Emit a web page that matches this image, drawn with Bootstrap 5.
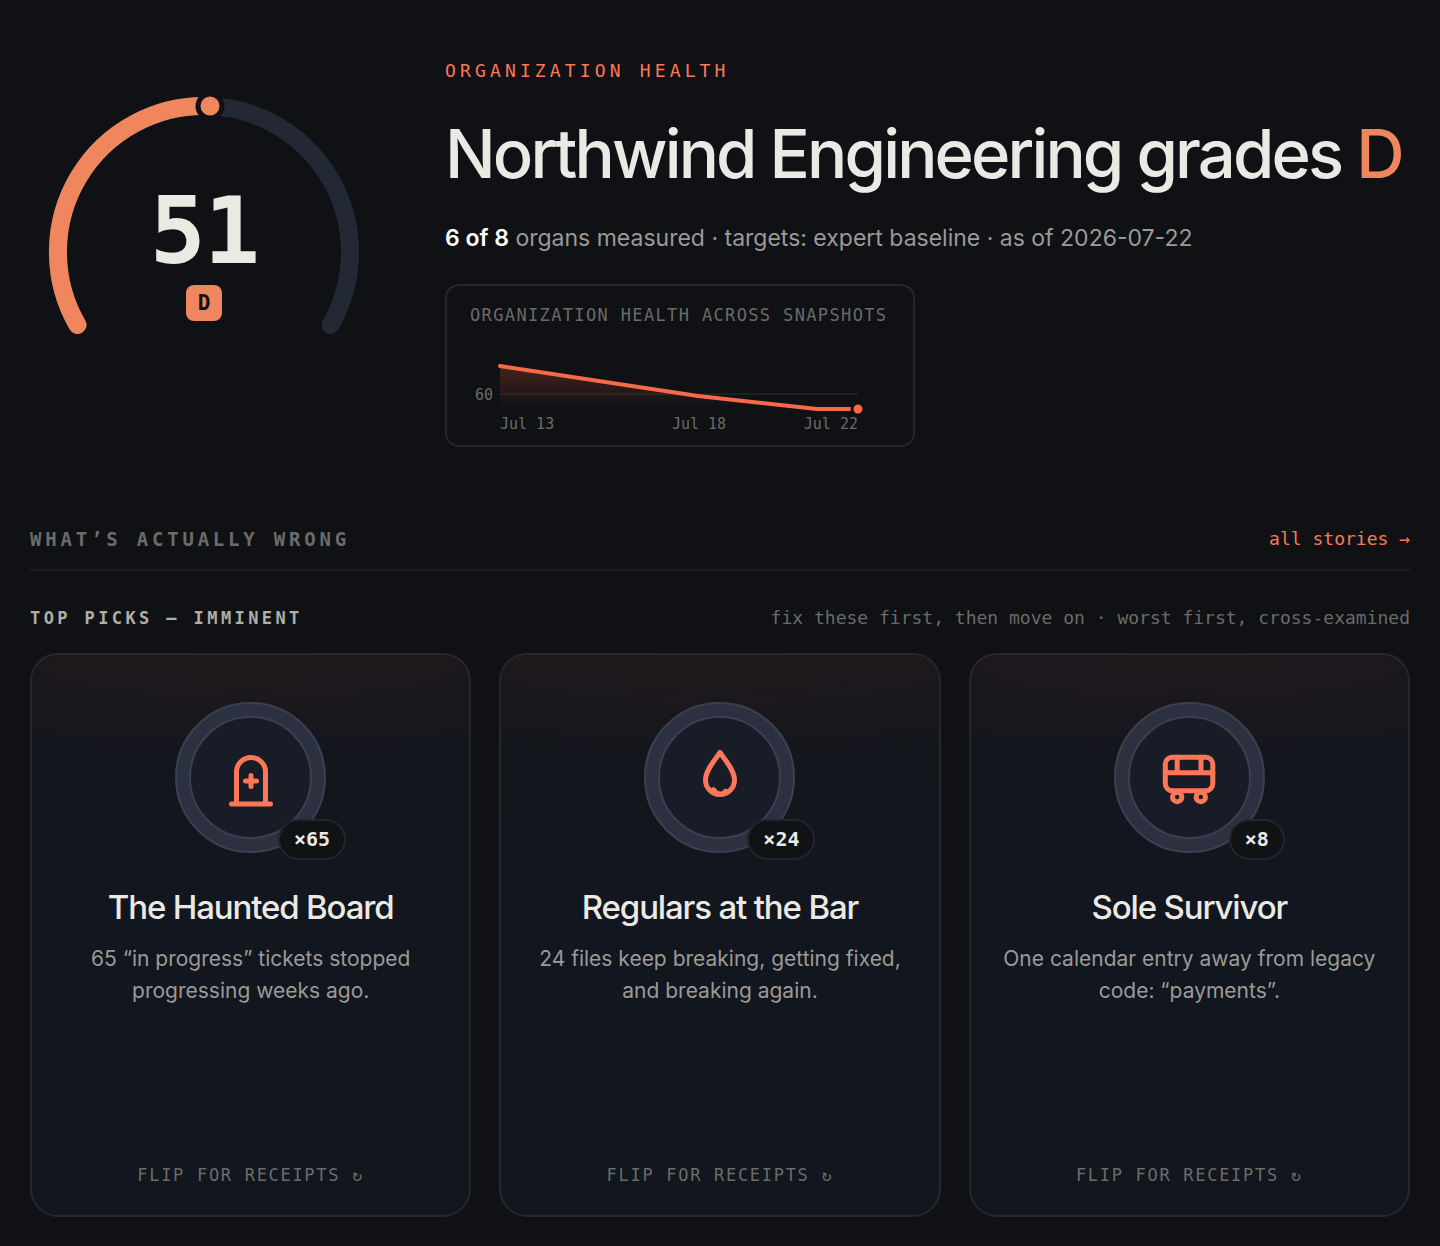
<!DOCTYPE html>
<html lang="en">
<head>
<meta charset="utf-8">
<meta name="viewport" content="width=device-width, initial-scale=1">
<title>Organization health</title>
<link href="https://cdn.jsdelivr.net/npm/bootstrap@5.3.0/dist/css/bootstrap.min.css" rel="stylesheet">
<style>
  :root { --accent: #fb7757; --grade: #f0865e; --ink: #ebe9e4; --muted: #9b9a96; --dim: #6b6b69; --edge: #24272c; }
  body { background: #0f1114; color: var(--ink); font-family: Inter, "Liberation Sans", sans-serif; }
  .page { padding: 56px 30px 29px; }
  .mono { font-family: "DejaVu Sans Mono", "Liberation Mono", monospace; }
  .hero { gap: 67px; }
  .gauge { width: 348px; }
  .gauge-readout { inset: 0; }
  .score { font-size: 93px; line-height: 96px; font-weight: 700; letter-spacing: -0.02em; }
  .grade-chip { width: 36px; height: 36px; border-radius: 8px; background: var(--grade); color: #0f1114; font-size: 21px; line-height: 36px; font-weight: 700; margin-top: 6px; }
  .kicker { font-size: 18px; line-height: 30px; letter-spacing: 0.23em; color: var(--accent); }
  .headline { font-size: 67px; line-height: 72px; font-weight: 500; letter-spacing: -0.043em; margin: 32px 0 30px; }
  .headline span { color: var(--grade); }
  .facts { font-size: 23px; line-height: 36px; color: var(--muted); margin-bottom: 28px; }
  .facts strong { color: #fff; font-weight: 600; }
  .trend { width: 470px; max-width: 100%; padding: 15px 23px 12px; border: 2px solid var(--edge); border-radius: 14px; }
  .trend-title { font-size: 17px; line-height: 28px; letter-spacing: 0.08em; color: var(--dim); }
  .trend svg text { font-size: 15px; fill: var(--dim); }
  .section-head { margin-top: 77px; padding-bottom: 15px; border-bottom: 2px solid #1a1d21; }
  .section-title { font-size: 19px; line-height: 30px; font-weight: 700; letter-spacing: 0.2em; color: var(--dim); }
  .all-link { font-size: 18px; line-height: 30px; color: var(--accent); }
  .picks-head { margin: 32px 0 20px; }
  .picks-title { font-size: 17px; line-height: 30px; font-weight: 700; letter-spacing: 0.2em; color: #b0aea6; }
  .picks-note { font-size: 18px; line-height: 30px; color: var(--dim); }
  .picks { --bs-gutter-x: 28px; }
  .pick { min-height: 564px; padding: 47px 30px 26px; border: 2px solid var(--edge); border-radius: 28px;
    background: radial-gradient(120% 110px at 50% 0, rgba(255, 90, 60, .05), transparent), linear-gradient(#15161b, #12161e 30%); }
  .medal { width: 151px; height: 151px; border: 2px solid #3b404d; border-radius: 50%; background: #2b3140; }
  .medal-core { width: 123px; height: 123px; border: 2px solid #3b404d; border-radius: 50%; background: #171c26; }
  .medal svg { stroke: var(--accent); stroke-width: 5; fill: none; stroke-linecap: round; stroke-linejoin: round; }
  .tally { right: -22px; bottom: -9px; height: 41px; line-height: 37px; padding: 0 14px; border: 2px solid #22252b; border-radius: 21px; background: #101216; font-size: 20px; font-weight: 700; }
  .pick-name { font-size: 33px; line-height: 40px; font-weight: 500; letter-spacing: -0.035em; margin: 34px 0 16px; }
  .pick-text { font-size: 21px; line-height: 32px; color: var(--muted); }
  .flip { font-size: 17px; line-height: 28px; letter-spacing: 0.1em; color: var(--dim); }
</style>
<script src="https://cdn.jsdelivr.net/npm/bootstrap@5.3.0/dist/js/bootstrap.bundle.min.js"></script>
</head>
<body>
<main class="page">
  <section class="hero d-flex align-items-center">
    <div class="gauge position-relative flex-shrink-0">
      <svg class="d-block w-100" viewBox="0 0 348 348" fill="none" stroke-width="18" stroke-linecap="round" aria-hidden="true">
        <path d="M47.5 247A146 146 0 1 1 300.5 247" stroke="#222935"/>
        <path d="M47.5 247A146 146 0 0 1 180 28.1" stroke="#f0865e"/>
        <circle cx="180" cy="28" r="12" fill="#f0865e" stroke="#0f1114" stroke-width="5"/>
      </svg>
      <div class="gauge-readout position-absolute d-flex flex-column align-items-center justify-content-center mono">
        <div class="score">51</div>
        <div class="grade-chip text-center">D</div>
      </div>
    </div>
    <div class="flex-grow-1">
      <div class="kicker mono">ORGANIZATION HEALTH</div>
      <h1 class="headline">Northwind Engineering grades <span>D</span></h1>
      <p class="facts"><strong>6 of 8</strong> organs measured · targets: expert baseline · as of 2026-07-22</p>
      <div class="trend mono">
        <div class="trend-title text-nowrap">ORGANIZATION HEALTH ACROSS SNAPSHOTS</div>
        <svg class="d-block" width="420" height="104" viewBox="0 0 420 104" role="img" aria-label="Health score from Jul 13 to Jul 22">
          <defs>
            <linearGradient id="fade" x1="0" y1="36" x2="0" y2="79" gradientUnits="userSpaceOnUse">
              <stop offset="0" stop-color="#ff5e3a" stop-opacity=".24"/>
              <stop offset="1" stop-color="#ff5e3a" stop-opacity="0"/>
            </linearGradient>
          </defs>
          <path d="M30 65H388" stroke="#1d2023" stroke-width="2"/>
          <path d="M30 37L228 67L347 80H30z" fill="url(#fade)"/>
          <path d="M30 37L228 67L347 80H388" fill="none" stroke="#f8694a" stroke-width="4" stroke-linecap="round" stroke-linejoin="round"/>
          <circle cx="388" cy="80" r="6" fill="#ff6a45" stroke="#0f1114" stroke-width="3"/>
          <text x="5" y="71">60</text>
          <text x="30" y="100">Jul 13</text>
          <text x="229" y="100" text-anchor="middle">Jul 18</text>
          <text x="388" y="100" text-anchor="end">Jul 22</text>
        </svg>
      </div>
    </div>
  </section>

  <section>
    <div class="section-head d-flex justify-content-between align-items-center mono">
      <h2 class="section-title mb-0">WHAT’S ACTUALLY WRONG</h2>
      <a class="all-link text-decoration-none" href="#stories">all stories →</a>
    </div>
    <div class="picks-head d-flex justify-content-between align-items-center mono">
      <h3 class="picks-title mb-0">TOP PICKS — IMMINENT</h3>
      <span class="picks-note">fix these first, then move on · worst first, cross-examined</span>
    </div>
    <div class="picks row" id="stories">
      <div class="col-4">
        <article class="pick h-100 d-flex flex-column align-items-center text-center">
          <div class="medal position-relative d-flex align-items-center justify-content-center">
            <div class="medal-core d-flex align-items-center justify-content-center">
              <svg width="60" height="60" viewBox="0 0 60 60" aria-hidden="true"><path d="M15.500 56V24a14.500 14.500 0 0 1 29 0v32M10.500 56h39M30 27.500v11M24.500 33h11"/></svg>
            </div>
            <span class="tally mono position-absolute">×65</span>
          </div>
          <h4 class="pick-name">The Haunted Board</h4>
          <p class="pick-text mb-0">65 “in progress” tickets stopped progressing weeks ago.</p>
          <button type="button" class="flip mono btn border-0 p-0 mt-auto">FLIP FOR RECEIPTS ↻</button>
        </article>
      </div>
      <div class="col-4">
        <article class="pick h-100 d-flex flex-column align-items-center text-center">
          <div class="medal position-relative d-flex align-items-center justify-content-center">
            <div class="medal-core d-flex align-items-center justify-content-center">
              <svg width="60" height="60" viewBox="0 0 60 60" aria-hidden="true"><path d="M30 4.500C35 12 44.500 22 44.500 32a14.500 14.500 0 0 1-29 0C15.500 22 25 12 30 4.500z"/><path d="M19 41q1-2 3 -.5q1-2.500 4 .5q1 3.500 5 3q2 0 3-2.500q2-1 3 .5q2-1.500 4-1l-4 5h-14z" fill="#fb7757" stroke-width="1"/></svg>
            </div>
            <span class="tally mono position-absolute">×24</span>
          </div>
          <h4 class="pick-name">Regulars at the Bar</h4>
          <p class="pick-text mb-0">24 files keep breaking, getting fixed, and breaking again.</p>
          <button type="button" class="flip mono btn border-0 p-0 mt-auto">FLIP FOR RECEIPTS ↻</button>
        </article>
      </div>
      <div class="col-4">
        <article class="pick h-100 d-flex flex-column align-items-center text-center">
          <div class="medal position-relative d-flex align-items-center justify-content-center">
            <div class="medal-core d-flex align-items-center justify-content-center">
              <svg width="60" height="60" viewBox="0 0 60 60" aria-hidden="true"><rect x="6.300" y="9.200" width="47.500" height="33.500" rx="7"/><path d="M6.300 24.800h47.500M18.200 9.200v15.600M42 9.200v15.600"/><circle cx="18.200" cy="49" r="4.700"/><circle cx="41.800" cy="49" r="4.700"/></svg>
            </div>
            <span class="tally mono position-absolute">×8</span>
          </div>
          <h4 class="pick-name">Sole Survivor</h4>
          <p class="pick-text mb-0">One calendar entry away from legacy code: “payments”.</p>
          <button type="button" class="flip mono btn border-0 p-0 mt-auto">FLIP FOR RECEIPTS ↻</button>
        </article>
      </div>
    </div>
  </section>
</main>
</body>
</html>
